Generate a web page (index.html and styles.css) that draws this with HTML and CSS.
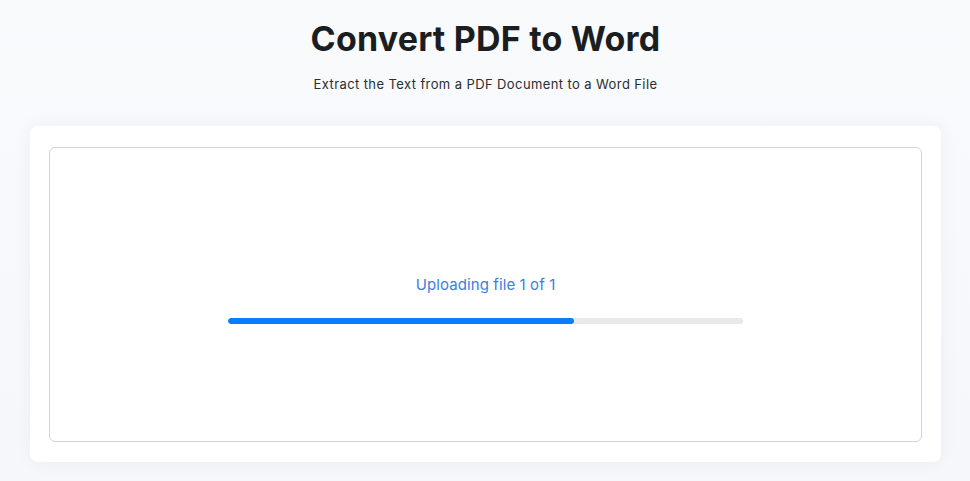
FILE: index.html
```html
<!DOCTYPE html>
<html lang="en">
<head>
    <meta charset="UTF-8">
    <meta name="viewport" content="width=device-width, initial-scale=1.0">
    <title>Convert PDF to Word</title>

    <link rel="stylesheet" href="styles.css">

</head>
<body>

    <header class="intro">
        <h1 class="intro-title">Convert PDF to Word</h1>
        <p class="intro-subTitle">Extract the Text from a PDF Document to a Word File</p>
    </header>


    <main class="card">

        <div class="drop">

            <!-- UPLOAD STATUS -->
            <div class="upload">
                <div class="upload-label">Uploading file 1 of 1</div>
                <div class="progress">
                    <div class="progress-fill" style="width: 67.2%"></div>
                </div>
            </div>

        </div>

    </main>

</body>
</html>
```

FILE: styles.css
```css
*{
    margin: 0;
    padding: 0;
    box-sizing: border-box;
}


body{
    font-family: Inter, "Open Sans", Arial, sans-serif;
    background: linear-gradient(180deg, #f9fafc 0%, #f5f7fa 100%);
    min-height: 100vh;
    padding: 0 29px 19px 30px;
}



.intro{
    display: flex;
    flex-direction: column;
    align-items: center;
    padding-top: 19px;
    height: 126px;
}
.intro-title{
    font-size: 34px;
    font-weight: 700;
    letter-spacing: 0.2px;
    color: #1b1e21;
    line-height: 40px;
}
.intro-subTitle{
    margin-top: 17px;
    font-size: 13px;
    color: #2a2d31;
    letter-spacing: 0.4px;
}



.card{
    background-color: #fff;
    border-radius: 8px;
    box-shadow: 0 0 18px 0 rgba(30, 50, 90, 0.05);
    padding: 21px 19px 20px 19px;
}

.drop{
    height: 295px;
    border: 1px solid #d3d4d6;
    border-radius: 6px;
    display: flex;
    align-items: center;
    justify-content: center;
}


.upload{
    width: 515px;
    display: flex;
    flex-direction: column;
    align-items: center;
    gap: 24px;
    margin-top: 9px;
}
.upload-label{
    color: #3c7ee0;
    font-size: 15px;
    letter-spacing: 0.1px;
}

.progress{
    width: 100%;
    height: 6px;
    border-radius: 3px;
    background-color: #e9e9ea;
    overflow: hidden;
}
.progress-fill{
    height: 100%;
    border-radius: 3px;
    background-color: #0a7cff;
}
```
